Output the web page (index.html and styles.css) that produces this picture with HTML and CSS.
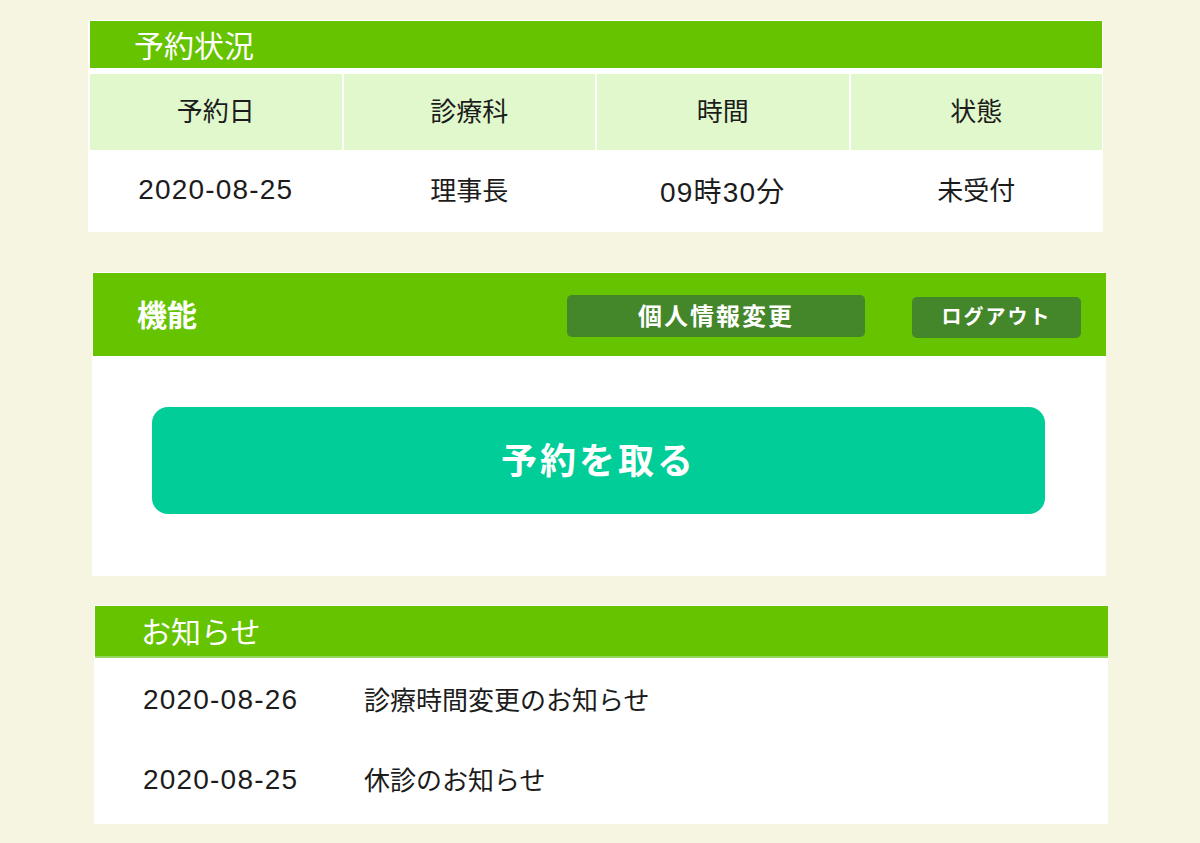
FILE: index.html
```html
<!DOCTYPE html>
<html lang="ja">
<head>
  <meta charset="UTF-8" />
  <meta name="viewport" content="width=device-width, initial-scale=1.0" />
  <title>マイページ</title>
  <link rel="stylesheet" href="styles.css">
</head>
<body>
  <section class="panel panel-reserve">
    <h2 class="panel-title">予約状況</h2>
    <div class="reserve-table">
      <div class="th">予約日</div>
      <div class="th">診療科</div>
      <div class="th">時間</div>
      <div class="th">状態</div>
      <div class="td num">2020-08-25</div>
      <div class="td">理事長</div>
      <div class="td num">09時30分</div>
      <div class="td">未受付</div>
    </div>
  </section>

  <section class="panel panel-menu">
    <div class="menu-head">
      <h2 class="menu-title">機能</h2>
      <button class="head-btn btn-profile">個人情報変更</button>
      <button class="head-btn btn-logout">ログアウト</button>
    </div>
    <div class="menu-body">
      <button class="big-btn">予約を取る</button>
    </div>
  </section>

  <section class="panel panel-news">
    <h2 class="panel-title news-title">お知らせ</h2>
    <ul class="news-list">
      <li><span class="news-date">2020-08-26</span><span>診療時間変更のお知らせ</span></li>
      <li><span class="news-date">2020-08-25</span><span>休診のお知らせ</span></li>
    </ul>
  </section>
</body>
</html>
```

FILE: styles.css
```css
:root {
  --bg: #f5f5e1;
  --green: #66c300;
  --green-line: #93d85c;
  --light: #e0f8cb;
  --dark: #44862a;
  --mint: #00cd98;
  --text: #1c1c1c;
}

body {
  margin: 0;
  padding: 20px 0 0;
  background: var(--bg);
  color: var(--text);
  font-family: "Liberation Sans", "Noto Sans CJK JP", sans-serif;
}

h2 {
  margin: 0;
  font-weight: normal;
}

button {
  font-family: inherit;
  border: none;
  cursor: pointer;
}

.panel {
  background: #fff;
  box-sizing: border-box;
}

.panel-title {
  background: var(--green);
  color: #fff;
  font-size: 30px;
  height: 47px;
  padding-left: 44px;
  display: flex;
  align-items: center;
  padding-bottom: 2px;
  box-sizing: border-box;
}

/* 予約状況 */
.panel-reserve {
  width: 1015px;
  margin-left: 88px;
  padding: 1px 1px 0 2px;
}

.reserve-table {
  display: grid;
  grid-template-columns: repeat(4, 1fr);
  column-gap: 2px;
  margin-top: 6px;
}

.th,
.td {
  display: flex;
  align-items: center;
  justify-content: center;
  font-size: 26px;
  box-sizing: border-box;
  padding-bottom: 5px;
}

.th {
  background: var(--light);
  height: 76px;
}

.td {
  height: 82px;
}

.num {
  font-size: 28px;
  letter-spacing: 1.2px;
  padding-bottom: 2px;
}

/* 機能 */
.panel-menu {
  width: 1014px;
  margin: 40px 0 0 92px;
  padding: 1px 0 0 1px;
}

.menu-head {
  background: var(--green);
  height: 83px;
  display: flex;
  align-items: center;
  padding: 0 25px 0 44px;
}

.menu-title {
  color: #fff;
  font-size: 30px;
  font-weight: bold;
  flex: 1;
  padding-bottom: 4px;
}

.head-btn {
  background: var(--dark);
  color: #fff;
  font-weight: bold;
  border-radius: 5px;
  letter-spacing: 2px;
  padding: 0 0 4px;
}

.btn-profile {
  width: 298px;
  height: 42px;
  font-size: 24px;
  margin-top: 3px;
}

.btn-logout {
  width: 169px;
  height: 41px;
  font-size: 20px;
  margin: 6px 0 0 47px;
}

.menu-body {
  padding: 51px 61px 62px 59px;
}

.big-btn {
  display: block;
  width: 100%;
  height: 107px;
  background: var(--mint);
  color: #fff;
  font-size: 36px;
  font-weight: bold;
  letter-spacing: 3px;
  border-radius: 16px;
  padding: 0 0 6px;
}

/* お知らせ */
.panel-news {
  width: 1014px;
  margin: 29px 0 0 94px;
  padding: 1px 0 0 1px;
}

.news-title {
  height: 52px;
  padding-left: 46px;
  border-bottom: 2px solid var(--green-line);
}

.news-list {
  list-style: none;
  margin: 0;
  padding: 2px 0 4px 48px;
}

.news-list li {
  display: flex;
  align-items: center;
  height: 80px;
  font-size: 26px;
  padding-bottom: 3px;
  box-sizing: border-box;
}

.news-date {
  width: 221px;
  font-size: 28px;
  letter-spacing: 1.2px;
  padding-top: 2px;
}
```
